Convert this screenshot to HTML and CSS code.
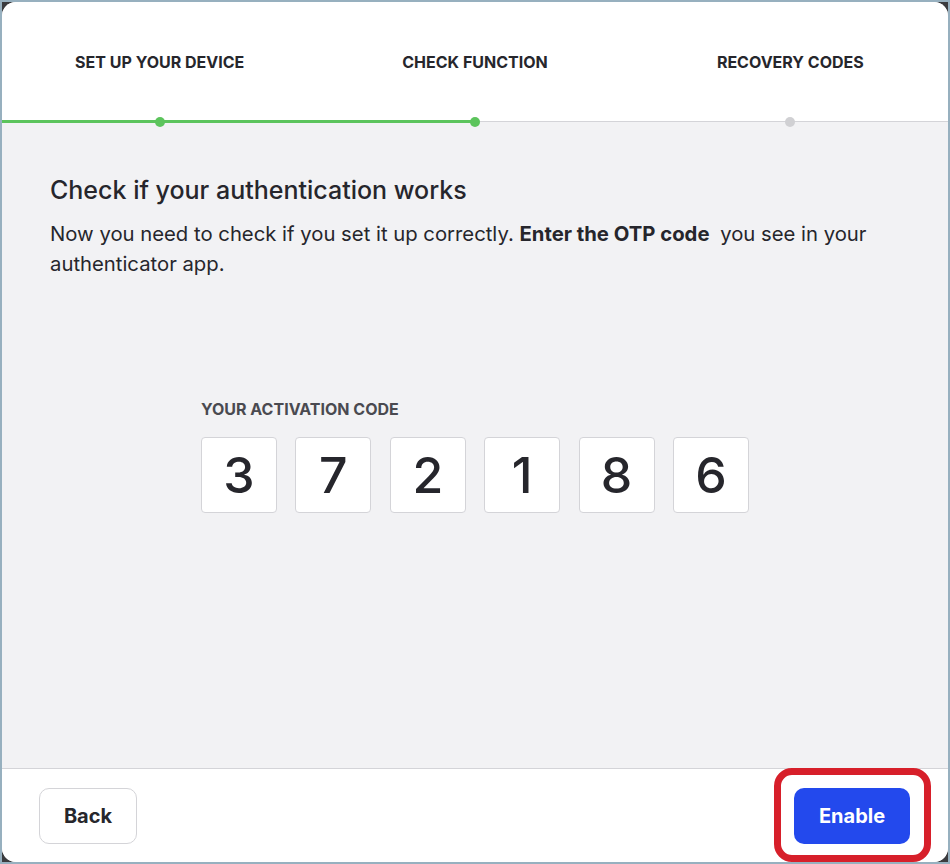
FILE: index.html
```html
<!DOCTYPE html>
<html>
<head>
    <title>Two-factor setup - Check function</title>
    <link rel="stylesheet" href="styles.css">
</head>
<body>
    <div class="frame">
        <div class="dialog">
            <div class="steps">
                <div class="step step-done">
                    <div class="step-label">SET UP YOUR DEVICE</div>
                    <div class="step-marker"><span class="dot"></span></div>
                </div>
                <div class="step step-current">
                    <div class="step-label">CHECK FUNCTION</div>
                    <div class="step-marker"><span class="dot"></span></div>
                </div>
                <div class="step">
                    <div class="step-label">RECOVERY CODES</div>
                    <div class="step-marker"><span class="dot"></span></div>
                </div>
            </div>

            <div class="content">
                <h1>Check if your authentication works</h1>
                <p class="intro">Now you need to check if you set it up correctly. <strong>Enter the OTP code</strong> you see in your authenticator app.</p>

                <div class="code-block">
                    <div class="code-label">YOUR ACTIVATION CODE</div>
                    <div class="code-digits">
                        <div class="digit">3</div>
                        <div class="digit">7</div>
                        <div class="digit">2</div>
                        <div class="digit">1</div>
                        <div class="digit">8</div>
                        <div class="digit">6</div>
                    </div>
                </div>
            </div>

            <div class="footer">
                <button class="btn btn-back">Back</button>
                <button class="btn btn-enable">Enable</button>
            </div>
        </div>
    </div>
</body>
</html>
```

FILE: styles.css
```css
html, body {
    margin: 0;
    padding: 0;
}
body {
    font-family: Inter, "Noto Sans", sans-serif;
    color: #26262c;
    background-color: #97b0bf;
}
.frame {
    box-sizing: border-box;
    width: 950px;
    height: 864px;
    border: 2px solid #97b0bf;
    background-color: #3b3b3e;
}
.dialog {
    height: 100%;
    display: flex;
    flex-direction: column;
    background-color: #f2f2f4;
    border-radius: 14px;
    overflow: hidden;
}

/* step indicator */
.steps {
    display: grid;
    grid-template-columns: 1fr 1fr 1fr;
    background-color: #ffffff;
    position: relative;
    z-index: 1;
}
.step {
    display: flex;
    flex-direction: column;
    align-items: center;
}
.step-label {
    box-sizing: border-box;
    height: 115px;
    padding-top: 5px;
    display: flex;
    align-items: center;
    font-size: 16px;
    font-weight: 700;
}
.step-marker {
    width: 100%;
    height: 10px;
    margin-bottom: -5px;
    display: flex;
    justify-content: center;
    background: linear-gradient(to bottom, transparent 4.5px, #d4d4d8 4.5px, #d4d4d8 5.5px, transparent 5.5px);
}
.step-done .step-marker {
    background: linear-gradient(to bottom, transparent 3.5px, #5cc45c 3.5px, #5cc45c 6.5px, transparent 6.5px);
}
.step-current .step-marker {
    background:
        linear-gradient(to bottom, transparent 3.5px, #5cc45c 3.5px, #5cc45c 6.5px, transparent 6.5px) left / 50% 100% no-repeat,
        linear-gradient(to bottom, transparent 4.5px, #d4d4d8 4.5px, #d4d4d8 5.5px, transparent 5.5px);
}
.dot {
    width: 10px;
    height: 10px;
    border-radius: 50%;
    background-color: #d0d0d3;
}
.step-done .dot,
.step-current .dot {
    background-color: #5cc45c;
}

/* main content */
.content {
    flex: 1;
    padding: 52px 48px 0 48px;
}
h1 {
    margin: 0;
    font-size: 25px;
    font-weight: 500;
    line-height: 32px;
}
.intro {
    margin: 13px 0 0 0;
    font-size: 20.3px;
    line-height: 30px;
}
.intro strong {
    font-weight: 700;
    margin-right: 5px;
}
.code-block {
    width: 548px;
    margin: 121px auto 0 auto;
}
.code-label {
    font-size: 16px;
    line-height: 19px;
    font-weight: 700;
    color: #4a4a50;
    margin-bottom: 18px;
}
.code-digits {
    display: flex;
    justify-content: space-between;
}
.digit {
    box-sizing: border-box;
    width: 76px;
    height: 76px;
    display: flex;
    align-items: center;
    justify-content: center;
    background-color: #ffffff;
    border: 1px solid #d4d4d8;
    border-radius: 4px;
    font-size: 50px;
    font-weight: 500;
}

/* footer */
.footer {
    display: flex;
    justify-content: space-between;
    align-items: center;
    height: 93px;
    padding: 0 38px 0 37px;
    background-color: #ffffff;
    border-top: 1px solid #d4d4d8;
}
.btn {
    height: 56px;
    border-radius: 10px;
    font-family: Inter, "Noto Sans", sans-serif;
    font-size: 20px;
    font-weight: 700;
    cursor: pointer;
}
.btn-back {
    width: 98px;
    background-color: #ffffff;
    color: #26262c;
    border: 1px solid #d4d4d8;
}
.btn-enable {
    width: 116px;
    background-color: #2349ed;
    color: #ffffff;
    border: none;
    position: relative;
}
.btn-enable::after {
    content: "";
    position: absolute;
    left: -20px;
    right: -21px;
    top: -20px;
    bottom: -18px;
    border: 7px solid #d71f2a;
    border-radius: 18px;
}
```
